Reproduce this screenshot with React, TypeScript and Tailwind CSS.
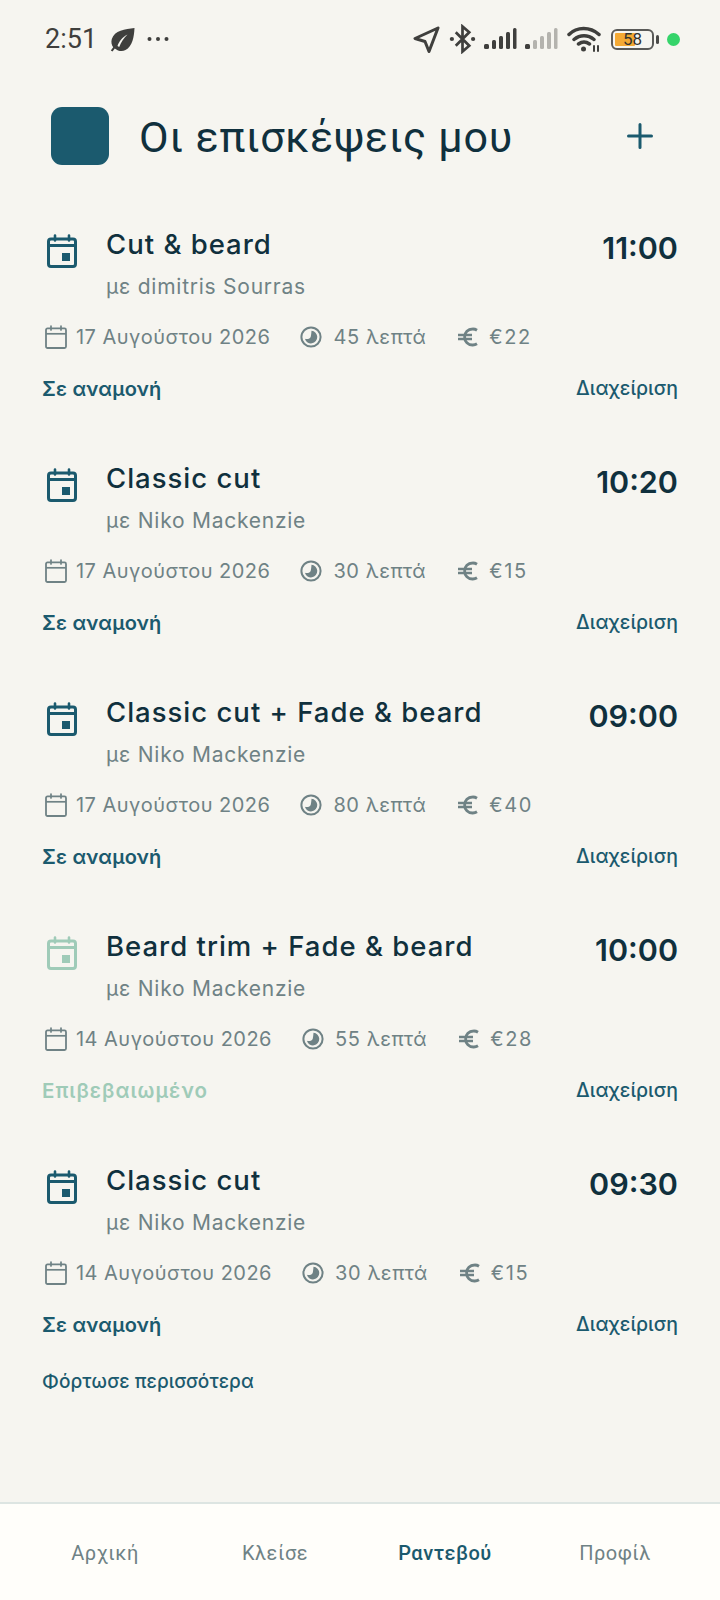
import React from "react";

const CalBig = ({ c }: { c: string }) => (
  <svg width="30" height="34" viewBox="0 0 30 34" fill="none" className="shrink-0" style={{ color: c }}>
    <path d="M8 1.500v5M22 1.500v5" stroke="currentColor" strokeWidth="2.600" strokeLinecap="round" />
    <rect x="1.500" y="5" width="27" height="27.500" rx="2.500" stroke="currentColor" strokeWidth="3" />
    <path d="M1.500 11.500h27" stroke="currentColor" strokeWidth="3" />
    <rect x="15" y="19" width="8" height="8" fill="currentColor" />
  </svg>
);
const CalSmall = () => (
  <svg width="22" height="24" viewBox="0 0 22 24" fill="none" className="shrink-0">
    <path d="M6 1v4M16 1v4" stroke="#6f8285" strokeWidth="1.700" strokeLinecap="round" />
    <rect x="1" y="3.400" width="20" height="19.600" rx="1.500" stroke="#6f8285" strokeWidth="1.800" />
    <path d="M1 8.800h20" stroke="#6f8285" strokeWidth="1.700" />
  </svg>
);
const Clock = () => (
  <svg width="22" height="22" viewBox="0 0 22 22" fill="none" className="shrink-0">
    <circle cx="11" cy="11" r="9.600" stroke="#6f8285" strokeWidth="2" />
    <path d="M11.500 4.800a6.300 6.300 0 1 1-6.600 8c2.800.6 5.300-.2 5.900-2.400.4-1.600.5-3.800.7-5.600Z" fill="#6f8285" />
  </svg>
);
const Euro = () => (
  <svg width="22" height="22" viewBox="0 0 22 22" fill="none" className="shrink-0">
    <path d="M20 4.200A8 8 0 0 0 15.500 3C11 3 7.600 6.400 7.600 11s3.400 8 7.900 8a8 8 0 0 0 4.500-1.200" stroke="#6f8285" strokeWidth="2.800" />
    <path d="M1 9h14M1 13h14" stroke="#6f8285" strokeWidth="2.400" />
  </svg>
);

const StatusBar = () => (
  <div className="h-[78px] flex items-center justify-between pl-[45px] pr-[40px] text-[#3f3f3d]">
    <div className="flex items-center">
      <span className="text-[27px] font-['Roboto',sans-serif] w-[65px]">2:51</span>
      <svg width="25" height="25" viewBox="0 0 25 25" fill="#3f3f3d">
        <path d="M24.500 1C15 2 4.500 3.500 1.800 12c-.9 3-.2 6 1.400 8.200L.8 23.500l1.700 1 2.300-3.100C8 24 12 24.800 15.500 23 22.500 19.500 24 10 24.500 1ZM7.500 19c1.500-4.500 5-9 10-11.500-3.700 3.500-6.400 7.500-8.300 12.500Z" />
      </svg>
      <svg width="22" height="6" viewBox="0 0 22 6" fill="#3f3f3d" className="ml-[12px]">
        <circle cx="2.500" cy="3" r="2" /><circle cx="11" cy="3" r="2" /><circle cx="19.500" cy="3" r="2" />
      </svg>
    </div>
    <div className="flex items-center">
      <svg width="27" height="27" viewBox="0 0 27 27" fill="none" stroke="#3f3f3d" strokeWidth="3" strokeLinejoin="round">
        <path d="M25 2 2 12.500l10 3 4 10Z" />
      </svg>
      <svg width="27" height="30" viewBox="0 0 28 30" fill="none" stroke="#3f3f3d" strokeWidth="2.800" className="ml-[9px]">
        <path d="M7 8l14 14-7 6V2l7 6L7 22" />
        <circle cx="3" cy="15" r="2.200" fill="#3f3f3d" stroke="none" /><circle cx="25" cy="15" r="2.200" fill="#3f3f3d" stroke="none" />
      </svg>
      <svg width="33" height="22" viewBox="0 0 33 22" className="ml-[8px]" fill="#3f3f3d">
        <rect x="0" y="16" width="5" height="5" rx="1.500" /><rect x="8" y="12" width="4" height="9" rx="1.500" /><rect x="15" y="8" width="4" height="13" rx="1.500" /><rect x="22" y="4" width="4" height="17" rx="1.500" /><rect x="29" y="0" width="3.500" height="21" rx="1.500" />
      </svg>
      <svg width="33" height="22" viewBox="0 0 33 22" className="ml-[8px]" fill="#b4b3ae">
        <rect x="0" y="16" width="5" height="5" rx="1.500" fill="#3f3f3d" /><rect x="8" y="12" width="4" height="9" rx="1.500" /><rect x="15" y="8" width="4" height="13" rx="1.500" /><rect x="22" y="4" width="4" height="17" rx="1.500" /><rect x="29" y="0" width="3.500" height="21" rx="1.500" />
      </svg>
      <svg width="34" height="26" viewBox="0 0 34 26" fill="none" stroke="#3f3f3d" strokeWidth="3.500" strokeLinecap="round" className="ml-[9px]">
        <path d="M2 8.500C10 .5 23 .5 32 8.500M7 13.500c6-5 14-5 20 0M11.500 18c3.500-2.500 7.500-2.500 11 0" />
        <circle cx="16.500" cy="23" r="2.500" fill="#3f3f3d" stroke="none" />
        <path d="M27 20v5M31 20v5" strokeWidth="2" />
      </svg>
      <div className="ml-[10px] relative w-[43px] h-[21px] rounded-[6px] border-[2px] border-[#5a5a58] flex items-center justify-center">
        <div className="absolute left-[2px] top-[2px] bottom-[2px] w-[20px] bg-[#f4a934] rounded-[1px]" />
        <span className="relative text-[17px] leading-none font-['Roboto',sans-serif] text-[#33332f]">58</span>
      </div>
      <div className="ml-[2px] w-[3px] h-[9px] rounded-full bg-[#4a4a48]" />
      <div className="ml-[8px] w-[13px] h-[13px] rounded-full bg-[#35d46a]" />
    </div>
  </div>
);

type V = { title: string; who: string; time: string; date: string; mins: string; price: string; status: string; ok?: boolean };

const Card = ({ v }: { v: V }) => (
  <div className="h-[234px] pl-[42px] pr-[42px]">
    <div className="flex items-start">
      <div className="w-[64px] pl-[5px] pt-[5px]"><CalBig c={v.ok ? "#9fcbb8" : "#1b5a6e"} /></div>
      <div className="flex-1">
        <div className="text-[27.500px] leading-[34px] -mt-[2px] font-medium tracking-[1px] text-[#10303d]">{v.title}</div>
        <div className="mt-[12px] text-[21px] leading-[28px] text-[#6f8285] tracking-[0.75px]">{v.who}</div>
      </div>
      <div className="text-[30.500px] leading-[36px] pt-[1px] font-semibold text-[#10303d]">{v.time}</div>
    </div>
    <div className="mt-[23px] pl-[3px] flex items-center text-[20px] leading-[26px] text-[#6f8285] tracking-[0.47px]">
      <CalSmall />
      <span className="ml-[9px] mr-[30px]">{v.date}</span>
      <Clock />
      <span className="ml-[11px] mr-[31px] tracking-[0.6px]">{v.mins}</span>
      <Euro />
      <span className="ml-[10px] tracking-[1.600px]">{v.price}</span>
    </div>
    <div className="mt-[26px] flex justify-between items-center">
      <span className={v.ok ? "text-[20.500px] leading-[26px] font-semibold tracking-[1px] text-[#9fcbb8]" : "text-[20px] leading-[26px] font-semibold tracking-[0.2px] text-[#1b5a6e]"}>{v.status}</span>
      <span className="text-[19.500px] leading-[24px] font-medium text-[#1b5a6e] -mt-[3px]">Διαχείριση</span>
    </div>
  </div>
);

const items: V[] = [
  { title: "Cut & beard", who: "με dimitris Sourras", time: "11:00", date: "17 Αυγούστου 2026", mins: "45 λεπτά", price: "€22", status: "Σε αναμονή" },
  { title: "Classic cut", who: "με Niko Mackenzie", time: "10:20", date: "17 Αυγούστου 2026", mins: "30 λεπτά", price: "€15", status: "Σε αναμονή" },
  { title: "Classic cut + Fade & beard", who: "με Niko Mackenzie", time: "09:00", date: "17 Αυγούστου 2026", mins: "80 λεπτά", price: "€40", status: "Σε αναμονή" },
  { title: "Beard trim + Fade & beard", who: "με Niko Mackenzie", time: "10:00", date: "14 Αυγούστου 2026", mins: "55 λεπτά", price: "€28", status: "Επιβεβαιωμένο", ok: true },
  { title: "Classic cut", who: "με Niko Mackenzie", time: "09:30", date: "14 Αυγούστου 2026", mins: "30 λεπτά", price: "€15", status: "Σε αναμονή" },
];

export default function App() {
  return (
    <div className="relative w-[720px] h-[1600px] bg-[#f6f5f0] flex flex-col font-['Inter','Noto_Sans',sans-serif] overflow-hidden">
      <StatusBar />
      <div className="mt-[29px] h-[58px] flex items-center pl-[51px] pr-[67px]">
        <div className="w-[58px] h-[58px] rounded-[11px] bg-[#1b5a6e]" />
        <div className="ml-[30px] pt-[3px] flex-1 text-[43px] font-['Roboto',sans-serif] text-[#10303d] tracking-[0.75px]">Οι επισκέψεις μου</div>
        <svg width="26" height="26" viewBox="0 0 26 26" stroke="#1b5a6e" strokeWidth="3" strokeLinecap="round"><path d="M13 1.500v23M1.500 13h23" /></svg>
      </div>
      <div className="mt-[64px]">
        {items.map((v, i) => <Card key={i} v={v} />)}
      </div>
      <div className="pl-[42px] -mt-[29px] text-[19px] leading-[24px] font-medium tracking-[0.1px] text-[#1b5a6e]">Φόρτωσε περισσότερα</div>
      <div className="mt-auto h-[98px] px-[20px] border-t-[2px] border-[#dde5e2] bg-[#fffefa] grid grid-cols-4 items-center text-center text-[20px] font-['Roboto',sans-serif] text-[#6f8285] tracking-[0.5px] pt-[2px]">
        <span>Αρχική</span>
        <span>Κλείσε</span>
        <span className="font-medium text-[#1b5a6e]">Ραντεβού</span>
        <span>Προφίλ</span>
      </div>
    </div>
  );
}
